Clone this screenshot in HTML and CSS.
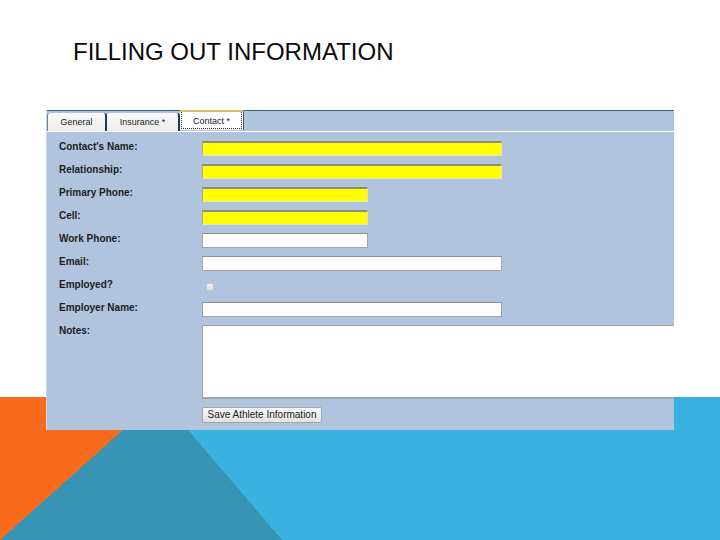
FILE: index.html
```html
<!DOCTYPE html>
<html>
<head>
<meta charset="utf-8">
<link rel="stylesheet" href="styles.css">
</head>
<body>
<div class="slide">
  <h1 class="title">FILLING OUT INFORMATION</h1>
  <div class="panel">
    <div class="tabs">
      <div class="tab tab-general">General</div>
      <div class="tab tab-insurance">Insurance *</div>
      <div class="tab tab-active"><span class="tab-focus">Contact *</span></div>
    </div>
    <div class="form">
      <div class="label">Contact's Name:</div>
      <div class="field"><input class="input long req" type="text"></div>
      <div class="label">Relationship:</div>
      <div class="field"><input class="input long req" type="text"></div>
      <div class="label">Primary Phone:</div>
      <div class="field"><input class="input short req" type="text"></div>
      <div class="label">Cell:</div>
      <div class="field"><input class="input short req" type="text"></div>
      <div class="label">Work Phone:</div>
      <div class="field"><input class="input short" type="text"></div>
      <div class="label">Email:</div>
      <div class="field"><input class="input long" type="text"></div>
      <div class="label">Employed?</div>
      <div class="field"><input class="check" type="checkbox"></div>
      <div class="label">Employer Name:</div>
      <div class="field"><input class="input long" type="text"></div>
      <div class="label">Notes:</div>
      <div class="field"><textarea class="notes"></textarea></div>
      <div class="label"></div>
      <div class="field"><button class="save" type="button">Save Athlete Information</button></div>
    </div>
  </div>
</div>
</body>
</html>
```
FILE: styles.css
```css
html, body {
  margin: 0;
  padding: 0;
}

.slide {
  width: 720px;
  height: 540px;
  overflow: hidden;
  box-sizing: border-box;
  padding-top: 38px;
  background:
    linear-gradient(to bottom right, #f96b1c 50%, transparent 50%) 0 397px / 160px 143px no-repeat,
    linear-gradient(#3894b4, #3894b4) 0 397px / 160px 143px no-repeat,
    linear-gradient(to top right, #3894b4 50%, transparent 50%) 160px 397px / 122px 143px no-repeat,
    linear-gradient(#3ab2df, #3ab2df) 0 397px / 100% 143px no-repeat,
    #ffffff;
}

.title {
  margin: 0 0 0 73px;
  font-family: "Liberation Sans", Arial, sans-serif;
  font-weight: normal;
  font-size: 24px;
  line-height: 28px;
  color: #0a0a0a;
}

.panel {
  margin: 44px 0 0 46px;
  width: 628px;
  box-sizing: border-box;
  border-left: 1px solid #cfd6de;
  background: #b0c4de;
}

.tabs {
  display: flex;
  height: 20px;
  border-top: 1px solid #34608a;
  border-bottom: 1px solid #ffffff;
  background: #b0c4de;
}

.tab {
  box-sizing: border-box;
  font-family: "Liberation Sans", Arial, sans-serif;
  font-size: 9px;
  color: #222222;
  text-align: center;
}

.tab-general,
.tab-insurance {
  margin-top: 2px;
  height: 18px;
  line-height: 18px;
  background: linear-gradient(#fbfbfb, #ececec);
  border-right: 2px solid #1f3a58;
  border-radius: 3px 3px 0 0;
}

.tab-general {
  width: 60px;
  border-left: 1px solid #6b7f95;
}

.tab-insurance {
  width: 73px;
}

.tab-active {
  width: 64px;
  height: 20px;
  margin-top: -1px;
  background: #ffffff;
  border-top: 2px solid #d9bd6c;
  border-right: 1px solid #4a5565;
  display: flex;
}

.tab-focus {
  flex: 1;
  margin: 0 1px 1px 1px;
  border: 1px dotted #333333;
  border-top: none;
  padding-top: 2px;
  line-height: 15px;
}

.form {
  display: grid;
  grid-template-columns: 143px 1fr;
  row-gap: 8px;
  padding: 9px 0 7px 12px;
}

.label {
  font-family: "Liberation Sans", Arial, sans-serif;
  font-weight: bold;
  font-size: 10px;
  line-height: 11px;
  color: #1c1c1c;
  min-height: 15px;
}

.field {
  display: flex;
  align-items: flex-start;
  min-height: 15px;
}

.input {
  box-sizing: border-box;
  height: 15px;
  margin: 0;
  padding: 0;
  background: #ffffff;
  border: 1px solid #a3a3a3;
  border-top-color: #8e8e8e;
}

.input.req {
  background: #ffff00;
  border-top: 2px solid #8f8f78;
  border-left-color: #a8a890;
  border-right-color: #e4e4b0;
  border-bottom-color: #e8e8c0;
}

.long {
  width: 300px;
}

.short {
  width: 166px;
}

.check {
  appearance: none;
  -webkit-appearance: none;
  box-sizing: border-box;
  width: 8px;
  height: 8px;
  margin: 4px 0 0 4px;
  padding: 0;
  border: 1px solid #c2c6cc;
  border-radius: 2px;
  background: linear-gradient(#f4f4f4, #dcdcdc);
}

.notes {
  box-sizing: border-box;
  width: 100%;
  height: 74px;
  margin: 0;
  padding: 0;
  resize: none;
  background: #ffffff;
  border: 1px solid #a0a0a0;
  border-right: none;
  border-bottom: 2px solid #a2a6ab;
}

.save {
  box-sizing: border-box;
  width: 120px;
  height: 16px;
  margin: 0;
  padding: 0 4px;
  font-family: "Liberation Sans", Arial, sans-serif;
  font-size: 10px;
  line-height: 14px;
  color: #1a1a1a;
  background: linear-gradient(#fbfbfb, #e2e2e2);
  border: 1px solid #a0a4a8;
  border-radius: 2px;
}
```
